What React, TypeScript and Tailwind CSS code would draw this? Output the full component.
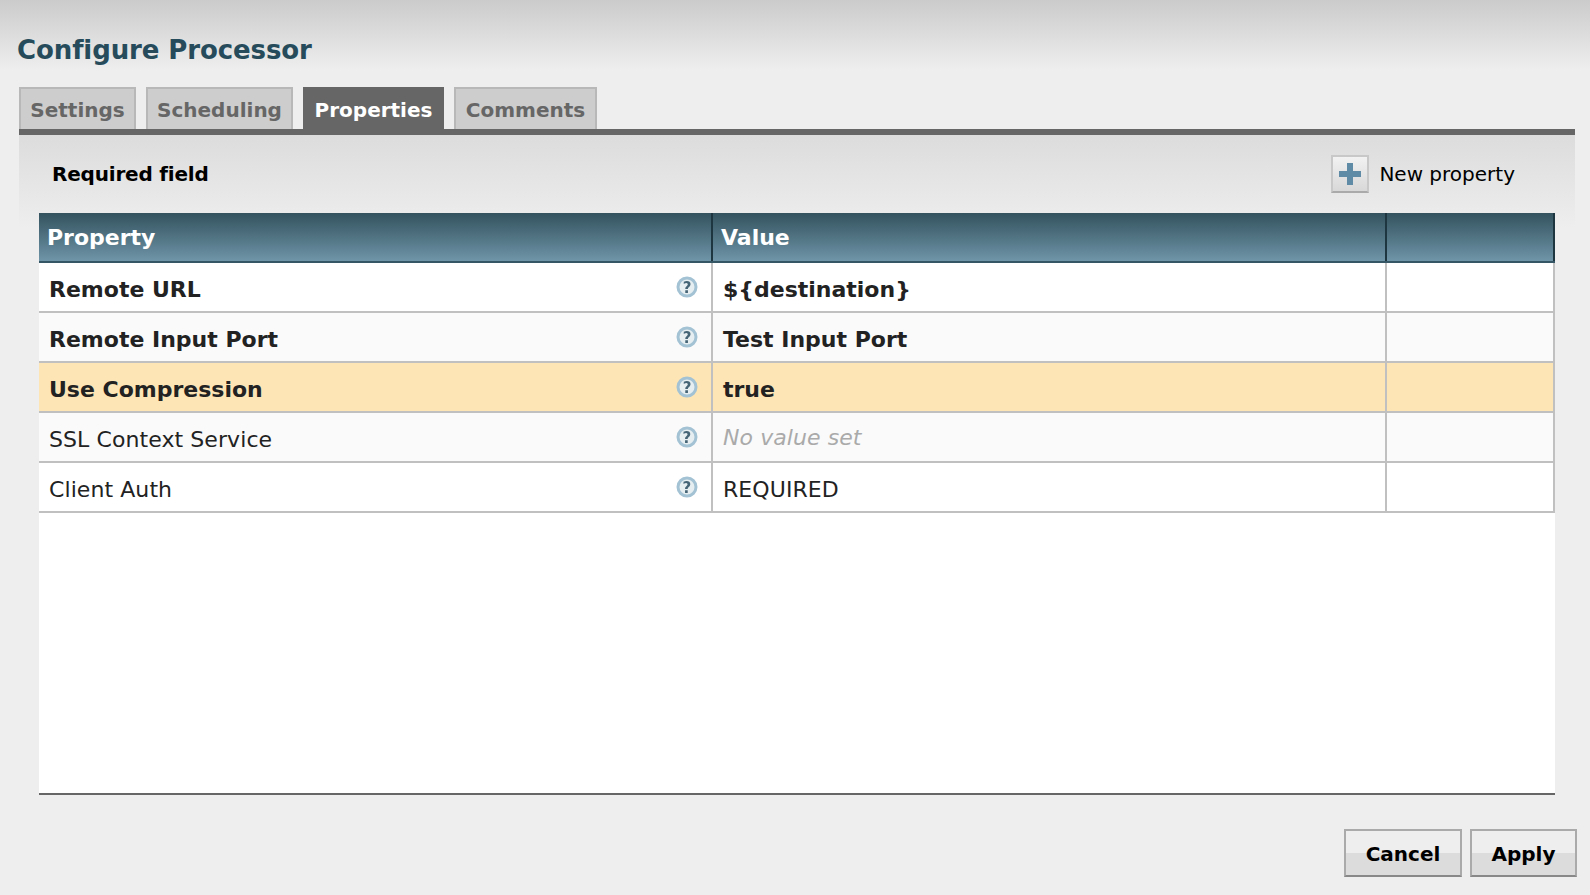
import React from 'react';

interface Row {
  name: string;
  value: string;
  required?: boolean;
  unset?: boolean;
  selected?: boolean;
}

const rows: Row[] = [
  { name: 'Remote URL', value: '${destination}', required: true },
  { name: 'Remote Input Port', value: 'Test Input Port', required: true },
  { name: 'Use Compression', value: 'true', required: true, selected: true },
  { name: 'SSL Context Service', value: 'No value set', unset: true },
  { name: 'Client Auth', value: 'REQUIRED' },
];

const tabs = [
  { label: 'Settings', width: 'w-[117px]' },
  { label: 'Scheduling', width: 'w-[147px]' },
  { label: 'Properties', width: 'w-[141px]', active: true },
  { label: 'Comments', width: 'w-[143px]' },
];

const HelpIcon: React.FC = () => (
  <svg width="22" height="22" viewBox="0 0 22 22" className="shrink-0 blur-[0.4px]">
    <circle cx="11" cy="11" r="9" fill="#e6eef2" stroke="#a3c2d3" strokeWidth="3" />
    <text
      x="11"
      y="16.5"
      textAnchor="middle"
      fontSize="15"
      fontWeight="700"
      fontFamily="'DejaVu Sans', sans-serif"
      fill="#456475"
    >
      ?
    </text>
  </svg>
);

const PlusIcon: React.FC = () => (
  <svg width="26" height="26" viewBox="0 0 26 26" className="blur-[0.6px]">
    <path d="M10 2h6v8h8v6h-8v8h-6v-8H2v-6h8z" fill="#5f8ba6" />
  </svg>
);

const App: React.FC = () => {
  return (
    <div className="w-[1590px] h-[895px] overflow-hidden flex flex-col bg-[#eeeeee] font-['DejaVu_Sans',sans-serif]">
      <div className="h-[87px] pl-[17px] pt-[32px] bg-gradient-to-b from-[#cbcbcb] to-[#eeeeee] to-80%">
        <h1 className="text-[26px] leading-[36px] font-bold text-[#264c5c] tracking-[-0.1px]">Configure Processor</h1>
      </div>

      <div className="ml-[19px] w-[1556px] flex gap-[10px] h-[42px]">
        {tabs.map((tab) => (
          <div
            key={tab.label}
            className={`${tab.width} flex items-center justify-center text-[20px] font-bold pt-[2px] ${
              tab.active
                ? 'bg-[#666666] text-white pt-[4px]'
                : 'bg-[#cdcdcd] text-[#666666] border-2 border-b-0 border-[#b8b8b8]'
            }`}
          >
            {tab.label}
          </div>
        ))}
      </div>
      <div className="ml-[19px] w-[1556px] h-[6px] bg-[#666666]" />

      <div className="ml-[19px] w-[1556px] pl-[20px] bg-[linear-gradient(#dcdcdc,#eeeeee_93px)]">
        <div className="w-[1516px] h-[78px] pl-[13px] pr-[40px] flex items-center justify-between">
          <span className="text-[20px] font-bold text-black tracking-[-0.2px]">Required field</span>
          <div className="flex items-center gap-[10px]">
            <div className="w-[38px] h-[38px] flex items-center justify-center border-2 border-[#c8c8c8] border-b-[#aaaaaa] bg-gradient-to-b from-[#f2f2f2] to-[#d8d8d8]">
              <PlusIcon />
            </div>
            <span className="text-[20px] text-black">New property</span>
          </div>
        </div>

        <div className="w-[1516px] h-[582px] flex flex-col bg-white border-b-2 border-[#666666]">
          <div className="h-[50px] shrink-0 flex text-[22px] font-bold text-white bg-gradient-to-b from-[#34535f] to-[#6f95a8] border-b-2 border-[#355765]">
            <div className="w-[674px] pl-[8px] flex items-center border-r-2 border-[#1d3640]">Property</div>
            <div className="w-[674px] pl-[8px] flex items-center border-r-2 border-[#1d3640]">Value</div>
            <div className="flex-1 border-r-2 border-[#1d3640]" />
          </div>
          {rows.map((row, i) => (
            <div
              key={row.name}
              className={`h-[50px] shrink-0 flex text-[22px] text-[#222222] border-b-2 border-[#c0c0c0] ${
                row.selected ? 'bg-[#fde5b5]' : i % 2 === 1 ? 'bg-[#fafafa]' : 'bg-white'
              } ${row.required ? 'font-bold' : 'tracking-[0.08px]'}`}
            >
              <div className="w-[674px] pl-[10px] pr-[13px] flex items-center justify-between border-r-2 border-[#c0c0c0]">
                <span className="pt-[5px]">{row.name}</span>
                <HelpIcon />
              </div>
              <div
                className={`w-[674px] pl-[10px] flex items-center border-r-2 border-[#c0c0c0] ${
                  row.unset ? 'italic text-[#aaaaaa]' : 'pt-[5px]'
                }`}
              >
                {row.value}
              </div>
              <div className="flex-1 border-r-2 border-[#c0c0c0]" />
            </div>
          ))}
        </div>
      </div>

      <div className="flex justify-end gap-[8px] pr-[13px] pt-[34px]">
        {['Cancel', 'Apply'].map((label) => (
          <button
            key={label}
            className={`${label === 'Cancel' ? 'w-[118px]' : 'w-[107px]'} h-[48px] pt-[2px] text-[20px] font-bold text-black border-2 border-[#aaaaaa] border-b-[#888888] bg-[linear-gradient(#eeeeee_50%,#dcdcdc_50%)]`}
          >
            {label}
          </button>
        ))}
      </div>
    </div>
  );
};

export default App;
